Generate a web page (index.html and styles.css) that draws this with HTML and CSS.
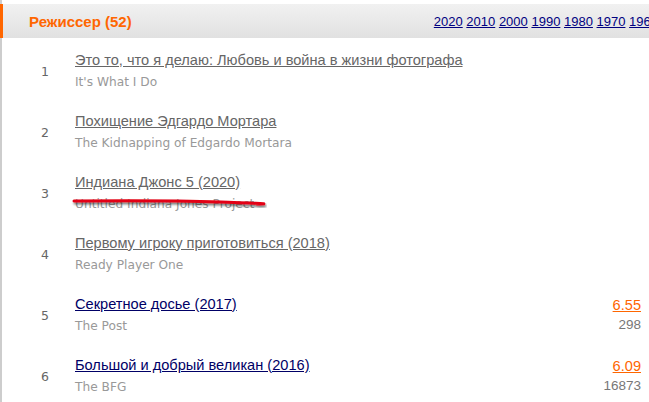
FILE: index.html
```html
<!DOCTYPE html>
<html lang="ru">
<head>
    <meta charset="UTF-8">
    <title>Режиссер</title>
    <link rel="stylesheet" href="styles.css">
</head>
<body>
    <div class="page">
        <div class="header">
            <span class="header-title">Режиссер (52)</span>
            <div class="years">
                <a href="#">2020</a> <a href="#">2010</a> <a href="#">2000</a> <a href="#">1990</a> <a href="#">1980</a> <a href="#">1970</a> <a href="#">1960</a>
            </div>
        </div>

        <div class="film-list">
            <div class="film">
                <div class="num">1</div>
                <div class="names">
                    <a href="#" class="title visited">Это то, что я делаю: Любовь и война в жизни фотографа</a>
                    <span class="orig">It's What I Do</span>
                </div>
                <div class="rating"></div>
            </div>
            <div class="film">
                <div class="num">2</div>
                <div class="names">
                    <a href="#" class="title visited">Похищение Эдгардо Мортара</a>
                    <span class="orig">The Kidnapping of Edgardo Mortara</span>
                </div>
                <div class="rating"></div>
            </div>
            <div class="film">
                <div class="num">3</div>
                <div class="names">
                    <a href="#" class="title visited">Индиана Джонс 5 (2020)</a>
                    <span class="orig">Untitled Indiana Jones Project</span>
                    <svg class="strike" width="196" height="14" viewBox="0 0 196 14">
                        <defs>
                            <filter id="shade" x="-5%" y="-100%" width="110%" height="300%">
                                <feGaussianBlur in="SourceAlpha" stdDeviation="1.3"/>
                                <feOffset dx="1" dy="2"/>
                                <feComponentTransfer><feFuncA type="linear" slope="0.55"/></feComponentTransfer>
                                <feMerge><feMergeNode/><feMergeNode in="SourceGraphic"/></feMerge>
                            </filter>
                        </defs>
                        <path d="M3 4 Q90 3 150 5 T186 7" stroke="#e30613" stroke-width="3" fill="none" stroke-linecap="round" filter="url(#shade)"/>
                    </svg>
                </div>
                <div class="rating"></div>
            </div>
            <div class="film">
                <div class="num">4</div>
                <div class="names">
                    <a href="#" class="title visited">Первому игроку приготовиться (2018)</a>
                    <span class="orig">Ready Player One</span>
                </div>
                <div class="rating"></div>
            </div>
            <div class="film">
                <div class="num">5</div>
                <div class="names">
                    <a href="#" class="title">Секретное досье (2017)</a>
                    <span class="orig">The Post</span>
                </div>
                <div class="rating">
                    <a href="#" class="score">6.55</a>
                    <span class="votes">298</span>
                </div>
            </div>
            <div class="film">
                <div class="num">6</div>
                <div class="names">
                    <a href="#" class="title">Большой и добрый великан (2016)</a>
                    <span class="orig">The BFG</span>
                </div>
                <div class="rating">
                    <a href="#" class="score">6.09</a>
                    <span class="votes">16873</span>
                </div>
            </div>
        </div>
    </div>
</body>
</html>
```

FILE: styles.css
```css
* {
    margin: 0;
    padding: 0;
    box-sizing: border-box;
}

body {
    font-family: "Liberation Sans", Arial, sans-serif;
    background: #fff;
    overflow: hidden;
}

.page {
    width: 649px;
    min-height: 100vh;
    padding-top: 4px;
    border-left: 2px solid #cdcdcd;
}

.header {
    display: flex;
    align-items: center;
    height: 34px;
    margin-left: -2px;
    padding-left: 26px;
    border-left: 3px solid #ff6600;
    background: linear-gradient(#f1f1f1, #e1e1e1);
}

.header-title {
    flex: 1;
    color: #ff6600;
    font-size: 15px;
    font-weight: bold;
}

.years {
    flex-shrink: 0;
    margin-right: -9px;
    white-space: nowrap;
    font-size: 13px;
}

.years a {
    color: #000080;
}

.film-list {
    padding-top: 5px;
}

.film {
    display: grid;
    grid-template-columns: 73px 1fr auto;
    align-items: center;
    height: 61px;
    padding-bottom: 6px;
}

.num {
    padding-left: 39px;
    padding-top: 2px;
    color: #666;
    font-family: "DejaVu Sans", Tahoma, sans-serif;
    font-size: 12.5px;
}

.names {
    position: relative;
    display: flex;
    flex-direction: column;
    gap: 5px;
}

.title {
    align-self: flex-start;
    color: #000066;
    font-size: 14.6px;
    line-height: 17px;
}

.title.visited {
    color: #666;
}

.orig {
    color: #999;
    font-family: "DejaVu Sans", Tahoma, sans-serif;
    font-size: 12.2px;
    line-height: 16px;
}

.strike {
    position: absolute;
    left: -4px;
    top: 23px;
}

.rating {
    display: flex;
    flex-direction: column;
    align-items: flex-end;
    gap: 3px;
    padding-right: 8px;
}

.score {
    color: #ff6600;
    font-size: 14.6px;
    line-height: 17px;
}

.votes {
    color: #777;
    font-size: 13.5px;
    line-height: 16px;
}
```
